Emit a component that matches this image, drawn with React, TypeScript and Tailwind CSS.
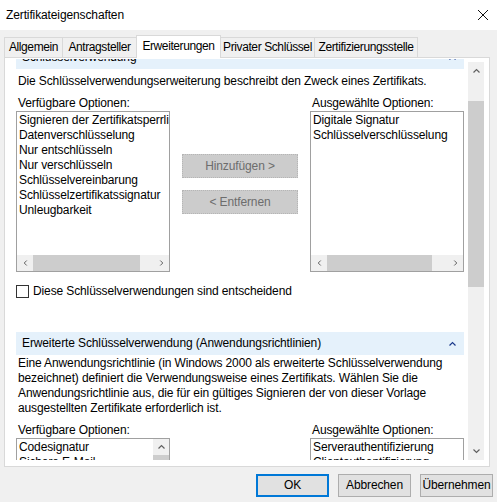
import React from "react";

type Dir = "up" | "down" | "left" | "right";

const FONT = { fontFamily: '"Liberation Sans", Arial, sans-serif' };

function Chev({ dir, className }: { dir: Dir; className?: string }) {
  const pts = {
    up: "1,6 5,2 9,6",
    down: "1,2 5,6 9,2",
    left: "6,1 2,5 6,9",
    right: "2,1 6,5 2,9",
  }[dir];
  const vb = dir === "up" || dir === "down" ? "0 0 10 8" : "0 0 8 10";
  return (
    <svg viewBox={vb} className={className} fill="none" stroke="currentColor" strokeWidth="1.6">
      <polyline points={pts} />
    </svg>
  );
}

const TABS = [
  { label: "Allgemein", w: "w-[59px]" },
  { label: "Antragsteller", w: "w-[74px]" },
  { label: "Erweiterungen", w: "w-[85px]", active: true },
  { label: "Privater Schlüssel", w: "w-[94px]" },
  { label: "Zertifizierungsstelle", w: "w-[103px]" },
];

function SectionHeader({ title }: { title: string }) {
  return (
    <div className="flex h-[23px] w-[448px] items-center justify-between bg-[#e5f1fb] pl-[6px] pr-[7px]">
      <span>{title}</span>
      <Chev dir="up" className="h-[6px] w-[9px] text-[#1c3a8c]" />
    </div>
  );
}

function HScroll({ thumb }: { thumb: string }) {
  return (
    <div className="flex h-[16px] shrink-0 items-center bg-[#f0f0f0] text-[#606060]">
      <div className="flex w-[16px] justify-center">
        <Chev dir="left" className="h-[8px] w-[5px]" />
      </div>
      <div className={`h-full bg-[#cdcdcd] ${thumb}`} />
      <div className="flex-1" />
      <div className="flex w-[16px] justify-center">
        <Chev dir="right" className="h-[8px] w-[5px]" />
      </div>
    </div>
  );
}

function ListBox({
  items,
  thumb,
  vScroll,
  h,
}: {
  items: string[];
  thumb?: string;
  vScroll?: boolean;
  h: string;
}) {
  return (
    <div className={`flex w-[154px] flex-col border border-[#a0a0a0] bg-white ${h}`}>
      <div className="flex min-h-0 flex-1">
        <div className="min-w-0 flex-1 overflow-hidden whitespace-nowrap pl-[2px] pt-[1px]">
          {items.map((it) => (
            <div key={it} className="h-[15px] leading-[15px]">
              {it}
            </div>
          ))}
        </div>
        {vScroll ? (
          <div className="flex w-[16px] flex-col bg-[#f0f0f0] text-[#606060]">
            <div className="flex h-[16px] items-center justify-center">
              <Chev dir="up" className="h-[6px] w-[9px]" />
            </div>
            <div className="flex-1 bg-[#cdcdcd]" />
          </div>
        ) : null}
      </div>
      {thumb ? <HScroll thumb={thumb} /> : null}
    </div>
  );
}

function DisabledButton({ label }: { label: string }) {
  return (
    <div className="flex h-[24px] w-[116px] items-center justify-center border border-dotted border-[#b5b5b5] bg-[#cccccc] text-[#6d6d6d]">
      {label}
    </div>
  );
}

function DialogButton({ label, primary }: { label: string; primary?: boolean }) {
  return (
    <div
      className={
        primary
          ? "flex h-[23px] w-[73px] items-center justify-center border-2 border-[#0078d7] bg-[#e1e1e1]"
          : "flex h-[23px] w-[73px] items-center justify-center border border-[#adadad] bg-[#e1e1e1]"
      }
    >
      {label}
    </div>
  );
}

export default function App() {
  return (
    <div
      className="flex h-[502px] w-[497px] flex-col overflow-hidden whitespace-nowrap bg-[#f0f0f0] text-[12px] leading-[15px] tracking-[-0.12px] text-black"
      style={FONT}
    >
      {/* Title bar */}
      <div className="flex h-[30px] shrink-0 items-center justify-between bg-white pl-[6px] pr-[9px]">
        <span>Zertifikateigenschaften</span>
        <svg viewBox="0 0 10 10" className="h-[10px] w-[10px]" stroke="#111" strokeWidth="1">
          <path d="M0 0L10 10M10 0L0 10" />
        </svg>
      </div>

      {/* Tabs */}
      <div className="relative z-10 mt-[5px] flex h-[22px] shrink-0 items-end pl-[4px] tracking-[-0.4px]">
        {TABS.map((t, i) =>
          t.active ? (
            <div
              key={t.label}
              className={`relative z-10 -mb-px -ml-px flex h-[23px] items-start justify-center border border-b-0 border-[#d9d9d9] bg-white pt-[3px] ${t.w}`}
            >
              {t.label}
            </div>
          ) : (
            <div
              key={t.label}
              className={`flex h-[20px] items-center justify-center border-t border-r border-[#d9d9d9] bg-[#f0f0f0] ${i === 0 ? "border-l" : ""} ${t.w}`}
            >
              {t.label}
            </div>
          ),
        )}
      </div>

      {/* Tab panel */}
      <div className="ml-[4px] flex h-[410px] w-[486px] shrink-0 border border-[#d9d9d9] bg-white">
        <div className="ml-[11px] mt-[1px] h-[401px] w-[452px] overflow-hidden">
          <div className="-mt-[13px]">
            <SectionHeader title="Schlüsselverwendung" />
            <p className="mt-[5px] pl-[2px]">
              Die Schlüsselverwendungserweiterung beschreibt den Zweck eines Zertifikats.
            </p>

            <div className="mt-[7px] grid w-[448px] grid-cols-[154px_140px_154px]">
              <div className="pl-[2px]">Verfügbare Optionen:</div>
              <div />
              <div className="pl-[2px]">Ausgewählte Optionen:</div>

              <ListBox
                h="h-[161px]"
                thumb="w-[107px]"
                items={[
                  "Signieren der Zertifikatsperrliste",
                  "Datenverschlüsselung",
                  "Nur entschlüsseln",
                  "Nur verschlüsseln",
                  "Schlüsselvereinbarung",
                  "Schlüsselzertifikatssignatur",
                  "Unleugbarkeit",
                ]}
              />
              <div className="flex flex-col items-center gap-[12px] pt-[43px]">
                <DisabledButton label="Hinzufügen >" />
                <DisabledButton label="< Entfernen" />
              </div>
              <ListBox
                h="h-[161px]"
                thumb="w-[105px]"
                items={["Digitale Signatur", "Schlüsselverschlüsselung"]}
              />
            </div>

            <label className="mt-[12px] flex items-center">
              <span className="h-[13px] w-[13px] border border-[#333333] bg-white" />
              <span className="ml-[4px]">Diese Schlüsselverwendungen sind entscheidend</span>
            </label>

            <div className="mt-[33px]">
              <SectionHeader title="Erweiterte Schlüsselverwendung (Anwendungsrichtlinien)" />
            </div>
            <div className="mt-px w-[448px] pl-[2px]">
              <p>Eine Anwendungsrichtlinie (in Windows 2000 als erweiterte Schlüsselverwendung</p>
              <p>bezeichnet) definiert die Verwendungsweise eines Zertifikats. Wählen Sie die</p>
              <p>Anwendungsrichtlinie aus, die für ein gültiges Signieren der von dieser Vorlage</p>
              <p>ausgestellten Zertifikate erforderlich ist.</p>
            </div>

            <div className="mt-[7px] grid w-[448px] grid-cols-[154px_140px_154px]">
              <div className="pl-[2px]">Verfügbare Optionen:</div>
              <div />
              <div className="pl-[2px]">Ausgewählte Optionen:</div>
              <ListBox
                h="h-[120px]"
                vScroll
                items={["Codesignatur", "Sichere E-Mail", "Zeitstempel"]}
              />
              <div />
              <ListBox
                h="h-[120px]"
                items={["Serverauthentifizierung", "Clientauthentifizierung"]}
              />
            </div>
          </div>
        </div>

        {/* Outer vertical scrollbar */}
        <div className="mt-[4px] flex h-[398px] w-[16px] flex-col bg-[#f0f0f0] text-[#606060]">
          <div className="flex h-[18px] items-center justify-center">
            <Chev dir="up" className="h-[6px] w-[9px]" />
          </div>
          <div className="mt-[21px] h-[186px] bg-[#cdcdcd]" />
          <div className="flex-1" />
          <div className="flex h-[18px] items-center justify-center">
            <Chev dir="down" className="h-[6px] w-[9px]" />
          </div>
        </div>
      </div>

      {/* Dialog buttons */}
      <div className="mt-[7px] flex shrink-0 pl-[256px]">
        <DialogButton label="OK" primary />
        <div className="ml-[9px]">
          <DialogButton label="Abbrechen" />
        </div>
        <div className="ml-[9px]">
          <DialogButton label="Übernehmen" />
        </div>
      </div>
    </div>
  );
}
